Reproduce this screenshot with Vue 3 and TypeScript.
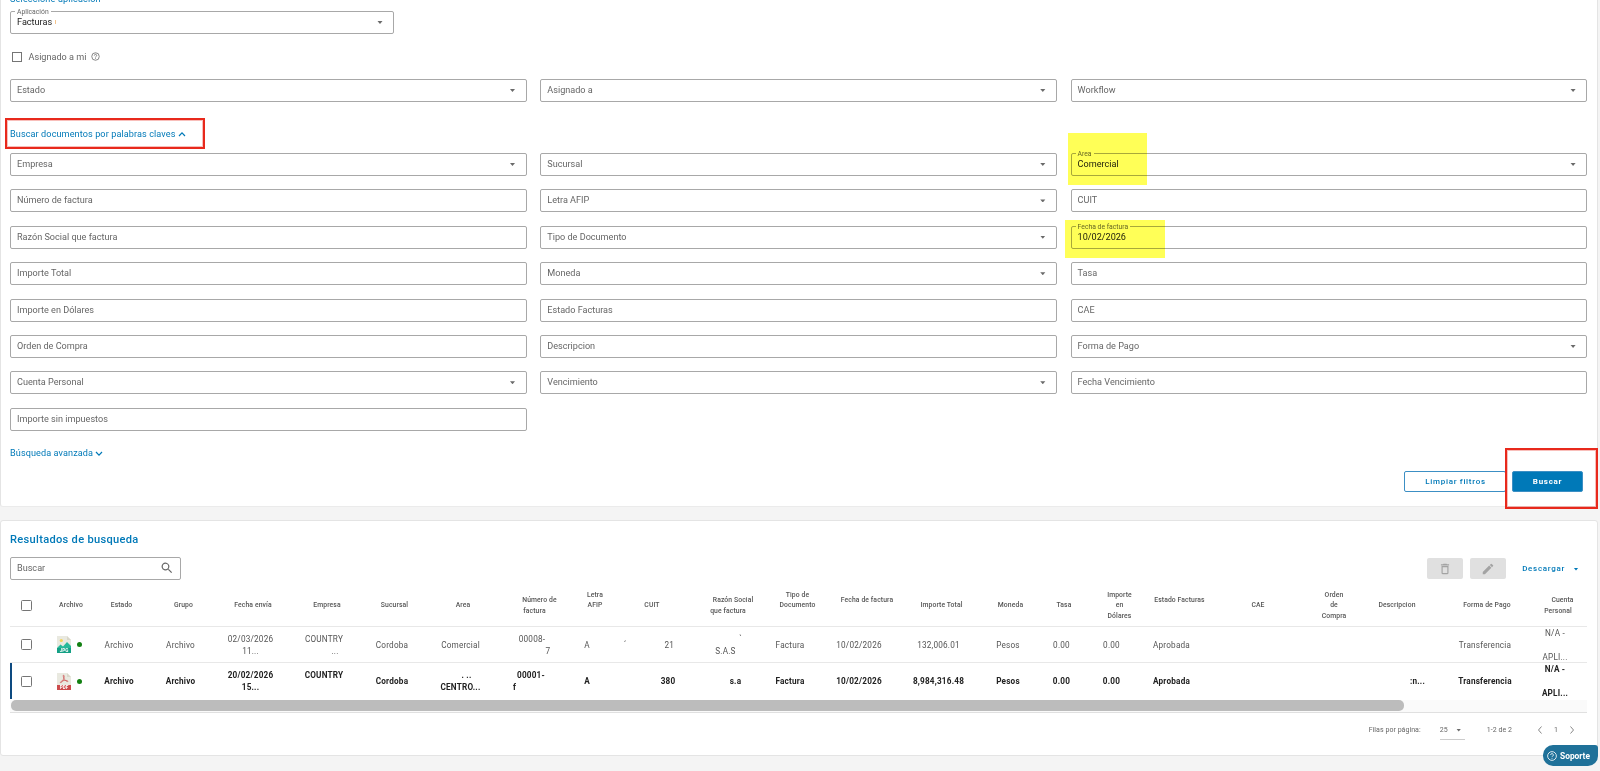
<script setup lang="ts">
import { ref } from 'vue'

interface Field {
  label: string
  value?: string
  select?: boolean
}

interface Line {
  text: string
  dx?: number
}

interface Column {
  title: (string | Line)[]
  head: number
  body: number
  width: number
}

interface Row {
  id: number
  kind: 'jpg' | 'pdf'
  unread: boolean
  cells: (string | Line[])[]
}

const mainFields: Field[] = [
  { label: 'Estado', select: true },
  { label: 'Asignado a', select: true },
  { label: 'Workflow', select: true },
]

const keywordFields: Field[] = [
  { label: 'Empresa', select: true },
  { label: 'Sucursal', select: true },
  { label: 'Area', value: 'Comercial', select: true },
  { label: 'Número de factura' },
  { label: 'Letra AFIP', select: true },
  { label: 'CUIT' },
  { label: 'Razón Social que factura' },
  { label: 'Tipo de Documento', select: true },
  { label: 'Fecha de factura', value: '10/02/2026' },
  { label: 'Importe Total' },
  { label: 'Moneda', select: true },
  { label: 'Tasa' },
  { label: 'Importe en Dólares' },
  { label: 'Estado Facturas' },
  { label: 'CAE' },
  { label: 'Orden de Compra' },
  { label: 'Descripcion' },
  { label: 'Forma de Pago', select: true },
  { label: 'Cuenta Personal', select: true },
  { label: 'Vencimiento', select: true },
  { label: 'Fecha Vencimiento' },
  { label: 'Importe sin impuestos' },
]

// head / body: centre of the column text, measured from the table's left edge
const columns: Column[] = [
  { title: ['Archivo'], head: 61, body: 59, width: 40 },
  { title: ['Estado'], head: 111.5, body: 109, width: 40 },
  { title: ['Grupo'], head: 173.5, body: 170.5, width: 50 },
  { title: ['Fecha envía'], head: 243, body: 240.5, width: 60 },
  { title: ['Empresa'], head: 317, body: 314, width: 50 },
  { title: ['Sucursal'], head: 384.5, body: 382, width: 50 },
  { title: ['Area'], head: 453, body: 450.5, width: 50 },
  { title: ['Número de', { text: 'factura', dx: -5 }], head: 529.5, body: 522, width: 50 },
  { title: ['Letra', 'AFIP', ''], head: 585, body: 577, width: 30 },
  { title: ['CUIT'], head: 642, body: 658, width: 40 },
  { title: ['Razón Social', { text: 'que factura', dx: -5 }], head: 723, body: 716.5, width: 50 },
  { title: ['Tipo de', 'Documento', ''], head: 787.5, body: 780, width: 46 },
  { title: ['Fecha de factura', ''], head: 857, body: 849, width: 60 },
  { title: ['Importe Total'], head: 931.5, body: 928.5, width: 60 },
  { title: ['Moneda'], head: 1000.5, body: 998, width: 36 },
  { title: ['Tasa'], head: 1054, body: 1051.5, width: 30 },
  { title: ['Importe', 'en', 'Dólares'], head: 1109.5, body: 1101.5, width: 34 },
  { title: ['Estado Facturas', ''], head: 1169.5, body: 1161.5, width: 60 },
  { title: ['CAE'], head: 1248, body: 1245, width: 40 },
  { title: ['Orden', 'de', 'Compra'], head: 1324, body: 1320, width: 40 },
  { title: ['Descripcion'], head: 1387, body: 1407.5, width: 50 },
  { title: ['Forma de Pago'], head: 1477, body: 1475, width: 60 },
  { title: [{ text: 'Cuenta', dx: 2.5 }, { text: 'Personal', dx: -2 }], head: 1550, body: 1545, width: 44 },
]

const rows = ref<Row[]>([
  {
    id: 1,
    kind: 'jpg',
    unread: false,
    cells: [
      '', 'Archivo', 'Archivo',
      [{ text: '02/03/2026' }, { text: '11...' }],
      [{ text: 'COUNTRY' }, { text: '...', dx: 11 }],
      'Cordoba', 'Comercial',
      [{ text: '00008-' }, { text: '7', dx: 16 }],
      'A', [{ text: '´' + ' '.repeat(17) + '21', dx: -19 }],
      [{ text: '`', dx: 14 }, { text: 'S.A.S', dx: -1 }],
      'Factura', '10/02/2026', '132,006.01', 'Pesos', '0.00', '0.00', 'Aprobada',
      '', '', '', 'Transferencia',
      [{ text: 'N/A -' }, { text: '' }, { text: 'APLI...' }],
    ],
  },
  {
    id: 2,
    kind: 'pdf',
    unread: true,
    cells: [
      '', 'Archivo', 'Archivo',
      [{ text: '20/02/2026' }, { text: '15...' }],
      [{ text: 'COUNTRY' }, { text: '' }],
      'Cordoba',
      [{ text: '. ..', dx: 6 }, { text: 'CENTRO...' }],
      [{ text: '00001-', dx: -1 }, { text: 'f', dx: -17.5 }],
      'A', [{ text: '380' }],
      [{ text: 's.a', dx: 9 }],
      'Factura', '10/02/2026', '8,984,316.48', 'Pesos', '0.00', '0.00', 'Aprobada',
      '', '', [{ text: ':n...' }], 'Transferencia',
      [{ text: 'N/A -' }, { text: '' }, { text: 'APLI...' }],
    ],
  },
])

const assignedToMe = ref(false)

function toLines(cell: string | (string | Line)[]): Line[] {
  const list = typeof cell === 'string' ? [cell] : cell
  return list.map(l => (typeof l === 'string' ? { text: l } : l))
}

function shift(line: Line) {
  return line.dx ? { transform: `translateX(${line.dx}px)` } : undefined
}

function place(index: number, part: 'head' | 'body') {
  const col = columns[index]
  const prev = columns[index - 1]
  // the checkbox cell takes the first 30px of the row
  const prevEnd = prev ? prev[part] + prev.width / 2 : 30
  return {
    width: `${col.width}px`,
    marginLeft: `${col[part] - col.width / 2 - prevEnd}px`,
  }
}
</script>

<template>
  <div class="page">
    <section class="card filters">
      <h2 class="filters__title">Seleccione aplicación</h2>
      <div class="field field--app field--filled">
        <span class="field__label">Aplicación</span>
        <span class="field__text">Facturas<i class="field__mark"></i></span>
        <i class="caret"></i>
      </div>

      <label class="assigned">
        <input v-model="assignedToMe" type="checkbox" class="check check--square">
        <span>Asignado a mi</span>
        <svg class="assigned__help" viewBox="0 0 24 24" fill="none" stroke="#707070" stroke-width="2.2">
          <circle cx="12" cy="12" r="10" />
          <path d="M8.8 9.5a3.2 3.2 0 1 1 4.8 2.7c-1 .7-1.6 1.1-1.6 2.3M12 16.2v2" />
        </svg>
      </label>

      <div class="grid">
        <div v-for="field in mainFields" :key="field.label" class="field">
          <span class="field__text">{{ field.label }}</span>
          <i v-if="field.select" class="caret"></i>
        </div>
      </div>

      <a class="link link--keywords">
        Buscar documentos por palabras claves
        <svg viewBox="0 0 10 10"><path d="M2 7l3-3.2L8 7" /></svg>
      </a>

      <div class="grid">
        <div
          v-for="field in keywordFields"
          :key="field.label"
          class="field"
          :class="{ 'field--filled': field.value }"
        >
          <span v-if="field.value" class="field__label">{{ field.label }}</span>
          <span class="field__text">{{ field.value ?? field.label }}</span>
          <i v-if="field.select" class="caret"></i>
        </div>
      </div>

      <a class="link link--advanced">
        Búsqueda avanzada
        <svg viewBox="0 0 10 10"><path d="M2 4l3 3.2L8 4" /></svg>
      </a>

      <div class="actions">
        <button class="btn btn--outline">Limpiar filtros</button>
        <button class="btn btn--primary">Buscar</button>
      </div>
    </section>

    <section class="card results">
      <h2 class="results__title">Resultados de busqueda</h2>
      <div class="toolbar">
        <div class="field field--search">
          <span class="field__text">Buscar</span>
          <svg class="field__lens" viewBox="2 2 20 20" fill="#666">
            <path d="M15.5 14h-.8l-.3-.3A6.5 6.5 0 1 0 13.7 14.4l.3.3v.8l5 5 1.5-1.5zM9.5 14a4.5 4.5 0 1 1 0-9 4.5 4.5 0 0 1 0 9z" />
          </svg>
        </div>
        <div class="toolbar__right">
          <button class="icon-btn">
            <svg viewBox="0 0 24 24" fill="#a3a3a3"><path d="M6 19c0 1.1.9 2 2 2h8c1.1 0 2-.9 2-2V7H6v12zM8 9h8v10H8V9zm7.5-5l-1-1h-5l-1 1H5v2h14V4z" /></svg>
          </button>
          <button class="icon-btn">
            <svg viewBox="0 0 24 24" fill="#a3a3a3"><path d="M3 17.25V21h3.75L17.81 9.94l-3.75-3.75L3 17.25zM20.71 7.04a1 1 0 0 0 0-1.41l-2.34-2.34a1 1 0 0 0-1.41 0l-1.83 1.83 3.75 3.75 1.83-1.83z" /></svg>
          </button>
          <button class="download">Descargar<i class="caret caret--blue"></i></button>
        </div>
      </div>

      <div class="table">
        <div class="table__row table__row--head">
          <span class="table__check"><input type="checkbox" class="check"></span>
          <div v-for="(col, i) in columns" :key="i" class="cell" :style="place(i, 'head')">
            <span
              v-for="(line, n) in toLines(col.title)"
              :key="n"
              class="cell__line"
              :style="shift(line)"
            >{{ line.text }}</span>
          </div>
        </div>
        <div
          v-for="row in rows"
          :key="row.id"
          class="table__row"
          :class="{ 'table__row--unread': row.unread }"
        >
          <span class="table__check"><input type="checkbox" class="check"></span>
          <div v-for="(cell, i) in row.cells" :key="i" class="cell" :style="place(i, 'body')">
            <div v-if="i === 0" class="file">
              <svg v-if="row.kind === 'jpg'" class="file__icon" viewBox="0 0 14 17">
                <path d="M0 0h10l4 4v13H0z" fill="#e9e9e0" />
                <path d="M10 0l4 4h-4z" fill="#d9d7ca" />
                <circle cx="4.3" cy="4.5" r="1.6" fill="#f3d55b" />
                <path d="M0 12l3.5-3.5L6 10.5 10 6l4 4v3H0z" fill="#26b99a" />
                <path d="M0 12h14v5H0z" fill="#14a085" />
                <text x="7" y="16.2" text-anchor="middle" class="file__ext">JPG</text>
              </svg>
              <svg v-else class="file__icon" viewBox="0 0 14 17">
                <path d="M0 0h10l4 4v13H0z" fill="#e9e9e0" />
                <path d="M10 0l4 4h-4z" fill="#d9d7ca" />
                <path d="M6.5 2.2c1.3 0 .6 3-.7 5.4C5 9.2 3.8 10 3.4 9.5s1.4-1.7 3.8-2 4 .3 3.7.9c-.5.8-2.7-.7-3.7-2.6s-1.2-3.6-.7-3.6z" fill="none" stroke="#cc4b4c" stroke-width=".7" />
                <path d="M0 12h14v5H0z" fill="#cc4b4c" />
                <text x="7" y="16.2" text-anchor="middle" class="file__ext">PDF</text>
              </svg>
              <i class="file__dot"></i>
            </div>
            <template v-else>
              <span
                v-for="(line, n) in toLines(cell)"
                :key="n"
                class="cell__line"
                :style="shift(line)"
              >{{ line.text }}</span>
            </template>
          </div>
        </div>
        <div class="scrollbar"><div class="scrollbar__thumb"></div></div>
      </div>

      <footer class="pager">
        <span>Filas por página:</span>
        <span class="pager__size">25<i class="caret"></i></span>
        <span class="pager__range">1-2 de 2</span>
        <svg class="pager__arrow" viewBox="0 0 10 10"><path d="M6.5 1.5L3.5 5l3 3.5" /></svg>
        <span class="pager__page">1</span>
        <svg class="pager__arrow" viewBox="0 0 10 10"><path d="M3.5 1.5l3 3.5-3 3.5" /></svg>
      </footer>
    </section>

    <div class="marker marker--area"></div>
    <div class="marker marker--date"></div>
    <div class="frame frame--keywords"></div>
    <div class="frame frame--search"></div>

    <button class="support">
      <svg viewBox="0 0 24 24" fill="none" stroke="#fff" stroke-width="2">
        <circle cx="12" cy="12" r="10.5" />
        <path d="M8.8 9.5a3.2 3.2 0 1 1 4.8 2.7c-1 .7-1.6 1.1-1.6 2.3M12 16.5v2" />
      </svg>
      Soporte
    </button>
  </div>
</template>

<style>
body {
  background: #f4f4f4;
  overflow: hidden;
}
</style>

<style scoped>
.page {
  position: relative;
  width: 1600px;
  height: 771px;
  overflow: hidden;
  background: #f4f4f4;
  font-family: Roboto, sans-serif;
  font-size: 9.1px;
  color: #666;
}
.page *,
.page *::before {
  box-sizing: border-box;
}
button {
  font: inherit;
  padding: 0;
  border: none;
  background: none;
}
.card {
  width: 1598px;
  background: #fff;
  border: 1px solid #e4e4e4;
  border-radius: 3px;
}
.filters {
  height: 513px;
  margin-top: -6px;
  padding: 0 9px;
  border-bottom-color: #ebebeb;
}
.filters__title {
  margin: 0;
  height: 16px;
  line-height: 9px;
  font-size: 9.1px;
  font-weight: 400;
  letter-spacing: 0.15px;
  color: #0079b8;
}
.grid {
  display: grid;
  grid-template-columns: repeat(3, 516.5px);
  column-gap: 13.8px;
  row-gap: 13.4px;
}
.field {
  position: relative;
  display: flex;
  align-items: center;
  justify-content: space-between;
  height: 23px;
  padding: 0 10px 1px 6px;
  border: 1px solid #a8a8a8;
  border-radius: 2px;
}
.field--filled .field__text {
  color: #222;
}
.field--app {
  width: 384px;
}
.field__label {
  position: absolute;
  top: -4px;
  left: 4px;
  padding: 0 2px;
  line-height: 9px;
  font-size: 6.8px;
  background: #fff;
}
.field__mark {
  display: inline-block;
  width: 1px;
  height: 4px;
  margin-left: 3px;
  background: #f5c48c;
  vertical-align: 1px;
}
.caret {
  width: 6px;
  height: 3px;
  margin-top: 1px;
  background: #6a6a6a;
  clip-path: polygon(8% 0, 92% 0, 50% 100%);
}
.caret--blue {
  background: #0079b8;
}
.check {
  appearance: none;
  width: 11px;
  height: 11px;
  margin: 0;
  border: 1px solid #757575;
  border-radius: 1.5px;
  background: #fff;
}
.check--square {
  width: 10px;
  height: 10px;
  border-radius: 0;
}
.assigned {
  display: flex;
  align-items: center;
  height: 45px;
  padding-left: 2px;
}
.assigned span {
  margin-left: 6.5px;
}
.assigned__help {
  width: 9px;
  height: 9px;
  margin-left: 5px;
}
.link {
  display: flex;
  align-items: center;
  color: #0079b8;
  letter-spacing: 0.1px;
}
.link svg {
  width: 10px;
  height: 10px;
  margin-left: 1px;
  fill: none;
  stroke: #0079b8;
  stroke-width: 1.2;
}
.link--keywords {
  height: 51px;
  padding-top: 12px;
}
.link--advanced {
  height: 44px;
}
.actions {
  display: flex;
  justify-content: flex-end;
  gap: 6px;
  padding-right: 5px;
  margin-top: -4px;
}
.btn {
  height: 21px;
  border: 1px solid #3c8fc4;
  border-radius: 2px;
  font-size: 8px;
  font-weight: 500;
  letter-spacing: 0.7px;
  color: #0079b8;
}
.btn--outline {
  width: 102px;
  padding-left: 1px;
}
.btn--primary {
  width: 71px;
  background: #0079b8;
  color: #fff;
  font-weight: 700;
}
.results {
  height: 236px;
  margin-top: 13px;
  padding: 0 9px;
}
.results__title {
  margin: 0;
  height: 36px;
  line-height: 37px;
  font-size: 11.1px;
  font-weight: 500;
  letter-spacing: 0.3px;
  color: #0079b8;
}
.toolbar {
  display: flex;
  align-items: center;
  justify-content: space-between;
  height: 23px;
}
.field--search {
  width: 171px;
  padding-right: 7px;
}
.field__lens {
  width: 12px;
  height: 12px;
}
.toolbar__right {
  display: flex;
  align-items: center;
  padding-right: 9px;
}
.icon-btn {
  display: flex;
  align-items: center;
  justify-content: center;
  width: 36px;
  height: 21px;
  margin-right: 7px;
  border-radius: 2px;
  background: #e0e0e0;
}
.icon-btn svg {
  width: 14px;
  height: 14px;
}
.download {
  display: flex;
  align-items: center;
  gap: 8px;
  margin-left: 9px;
  font-size: 8px;
  font-weight: 500;
  letter-spacing: 0.7px;
  color: #0079b8;
}
.table {
  width: 1577px;
  overflow: hidden;
  border-bottom: 1px solid #e0e0e0;
}
.table__row {
  display: flex;
  align-items: center;
  height: 36px;
  border-bottom: 1px solid #e8e8e8;
  font-size: 8.2px;
  line-height: 12px;
  letter-spacing: 0.2px;
  color: #555;
}
.table__row--head {
  height: 47px;
  padding-top: 5px;
  font-size: 6.8px;
  font-weight: 500;
  line-height: 10.2px;
  letter-spacing: 0.1px;
}
.table__row--unread {
  position: relative;
  height: 37px;
  padding-bottom: 1px;
  border-bottom: none;
  font-weight: 700;
  color: #222;
}
.table__row--unread::before {
  content: '';
  position: absolute;
  left: 0;
  top: 0;
  width: 2px;
  height: 36px;
  background: #0d4a80;
}
.table__check {
  flex: none;
  display: flex;
  width: 30px;
  padding-left: 11px;
}
.cell {
  flex: none;
  display: flex;
  flex-direction: column;
  align-items: center;
  white-space: pre;
}
.cell__line {
  display: block;
  min-height: 1lh;
}
.file {
  display: flex;
  align-items: center;
  gap: 6px;
}
.file__icon {
  width: 14px;
  height: 17px;
}
.file__ext {
  font-size: 4.6px;
  font-weight: 700;
  letter-spacing: 0;
  fill: #fff;
}
.file__dot {
  width: 5px;
  height: 5px;
  border-radius: 50%;
  background: #128012;
}
.scrollbar {
  height: 12px;
  padding-left: 1px;
  background: #fafafa;
}
.scrollbar__thumb {
  width: 1393px;
  height: 11px;
  border-radius: 5px;
  background: #bcbcbc;
}
.pager {
  display: flex;
  align-items: center;
  justify-content: flex-end;
  height: 33px;
  padding-right: 11px;
  font-size: 7px;
  letter-spacing: 0.05px;
}
.pager__size {
  display: flex;
  align-items: center;
  justify-content: space-between;
  width: 25px;
  height: 21px;
  margin-left: 19px;
  padding: 1px 3px 0 0;
  border-bottom: 1px solid #ccc;
}
.pager__range {
  margin-left: 22px;
}
.pager__arrow {
  width: 10px;
  height: 10px;
  fill: none;
  stroke: #888;
  stroke-width: 1;
}
.pager__range + .pager__arrow {
  margin-left: 23px;
}
.pager__page {
  margin: 0 9px;
}
.marker {
  position: absolute;
  background: #ffff57;
  mix-blend-mode: multiply;
}
.marker--area {
  left: 1068px;
  top: 133px;
  width: 79px;
  height: 52px;
}
.marker--date {
  left: 1065px;
  top: 220px;
  width: 100px;
  height: 38px;
}
.frame {
  position: absolute;
  border: 2px solid #e8291c;
  box-shadow: inset 0 0 0 1px rgba(232, 41, 28, 0.3);
}
.frame--keywords {
  left: 5px;
  top: 118px;
  width: 200px;
  height: 31px;
}
.frame--search {
  left: 1505px;
  top: 448px;
  width: 93px;
  height: 61px;
}
.support {
  position: absolute;
  left: 1543px;
  top: 745px;
  display: flex;
  align-items: center;
  gap: 3px;
  width: 55px;
  height: 21px;
  padding-left: 4px;
  border-radius: 10px 3px 10px 10px;
  background: #1f7199;
  color: #fff;
  font-size: 8.4px;
  font-weight: 700;
}
.support svg {
  width: 10px;
  height: 10px;
}
</style>
